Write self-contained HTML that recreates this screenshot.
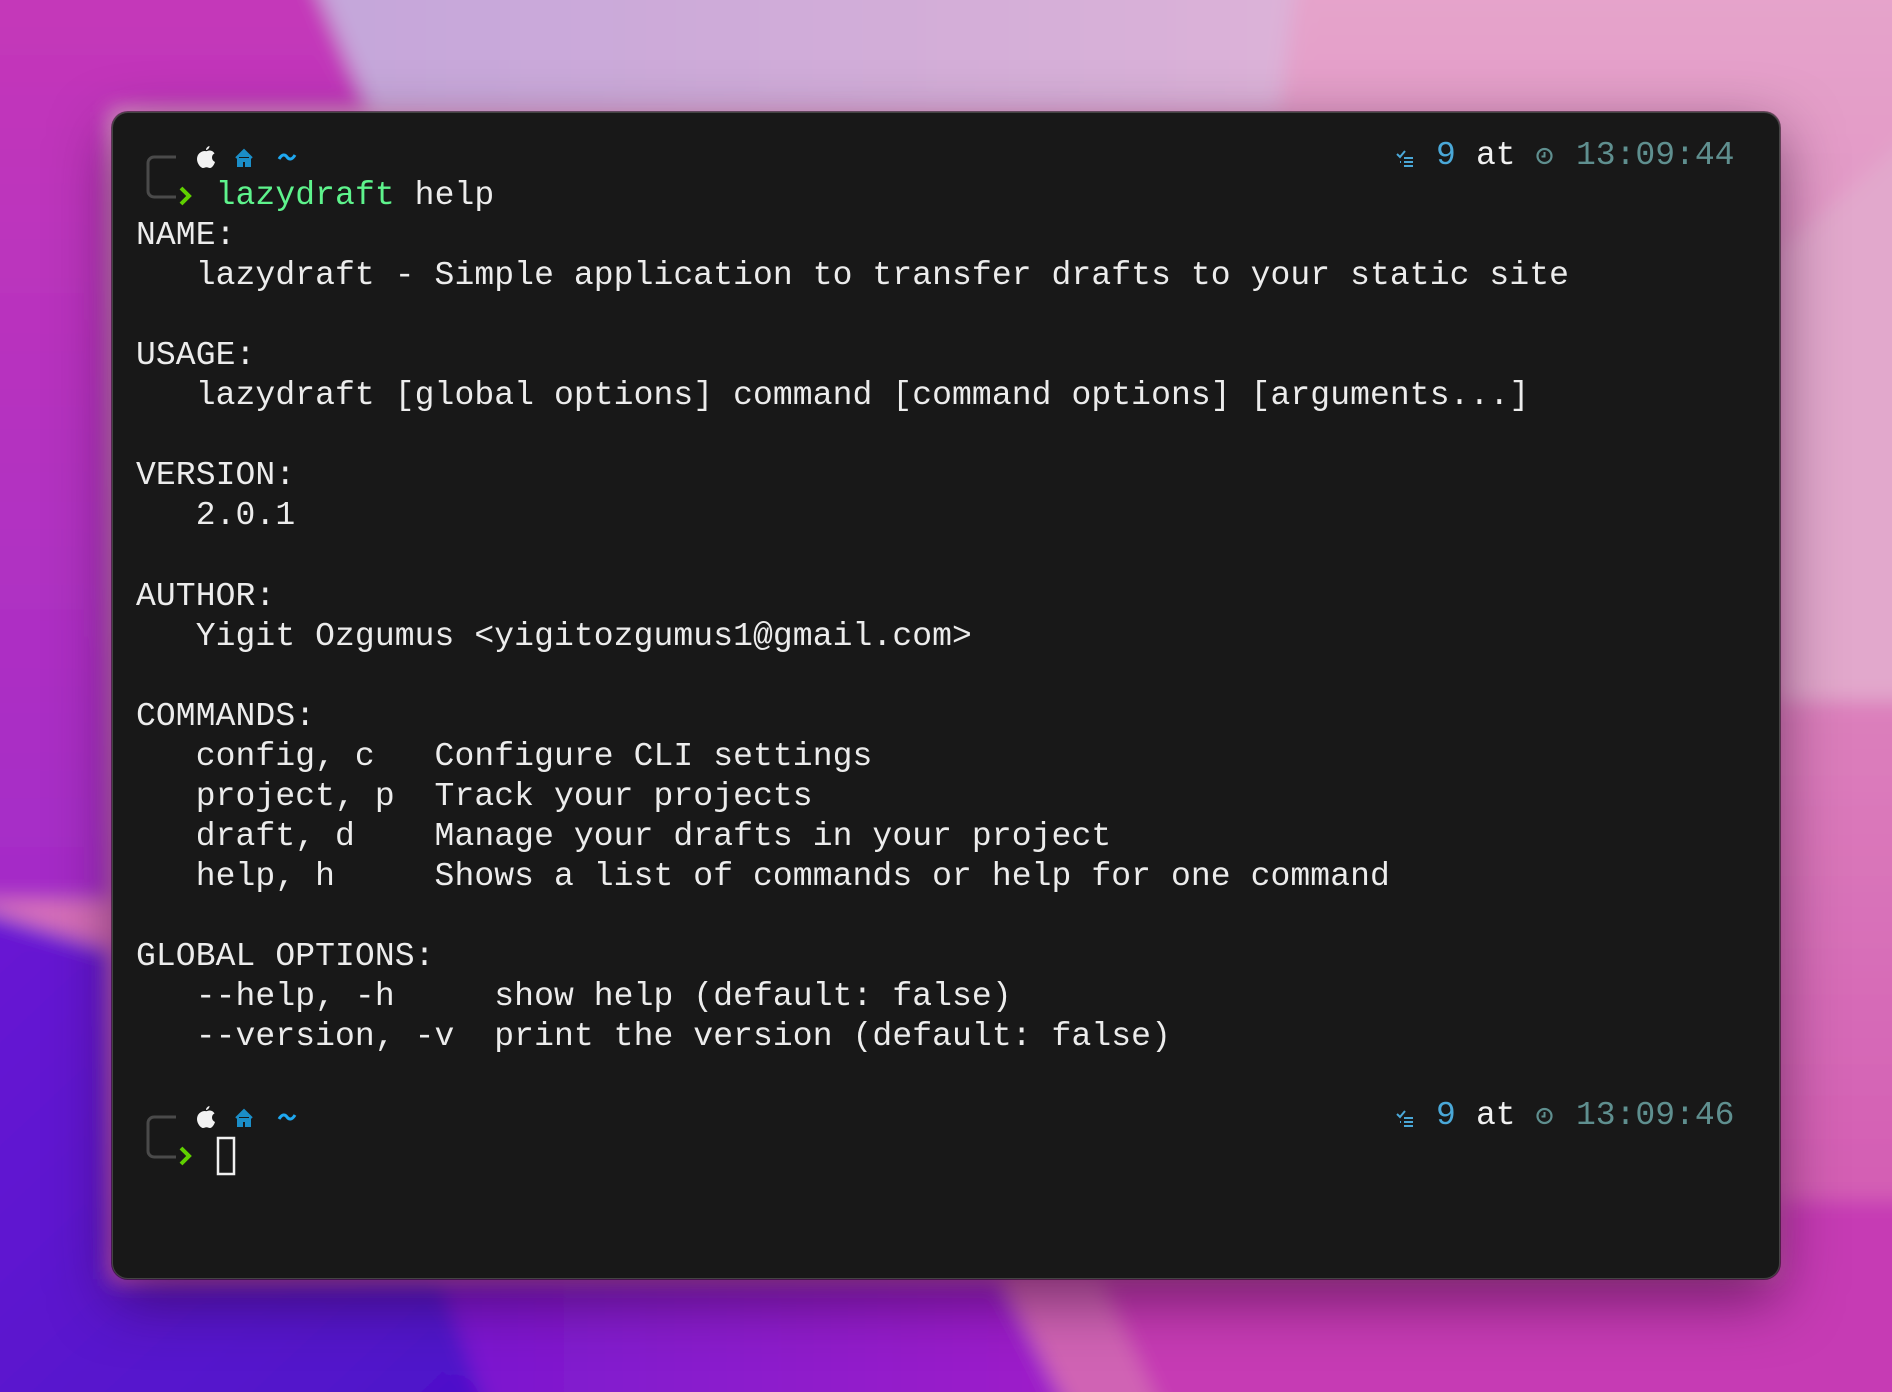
<!DOCTYPE html>
<html><head><meta charset="utf-8"><style>
html,body{margin:0;padding:0;width:1892px;height:1392px;overflow:hidden;}
body{position:relative;background:#b040c0;font-family:"Liberation Mono",monospace;}
#bg{position:absolute;left:0;top:0;}
.win{position:absolute;left:112px;top:112px;width:1668px;height:1167px;background:#181818;border-radius:16px;border:1px solid #444;box-sizing:border-box;box-shadow:0 20px 60px rgba(40,0,40,.55),0 0 0 1px rgba(0,0,0,.5);}
pre{position:absolute;left:136px;top:136px;margin:0;font-family:"Liberation Mono",monospace;font-size:33px;line-height:40.05px;color:#ececec;letter-spacing:0.1px;}
.g{color:#5ef38c}
.abs{position:absolute;font-size:33px;line-height:40px;font-family:"Liberation Mono",monospace;white-space:pre}
</style></head><body>
<svg id="bg" width="1892" height="1392" viewBox="0 0 1892 1392">
<defs>
<filter id="b"><feGaussianBlur stdDeviation="10"/></filter>
<linearGradient id="g1" x1="0" y1="0" x2="0" y2="1"><stop offset="0" stop-color="#c638b8"/><stop offset="1" stop-color="#a42cc8"/></linearGradient>
<linearGradient id="g2" x1="0" y1="0" x2="1" y2="0"><stop offset="0" stop-color="#c4a6da"/><stop offset="1" stop-color="#dcb2d8"/></linearGradient>
<linearGradient id="g3" x1="0" y1="0" x2="0" y2="1"><stop offset="0" stop-color="#e6a6cc"/><stop offset="0.5" stop-color="#dc80bc"/><stop offset="1" stop-color="#cf4cb0"/></linearGradient>
<linearGradient id="g4" x1="0" y1="0" x2="1" y2="1"><stop offset="0" stop-color="#6a1ad4"/><stop offset="1" stop-color="#4a10c8"/></linearGradient>
<linearGradient id="g5" x1="0" y1="0" x2="1" y2="0"><stop offset="0" stop-color="#7a18d0"/><stop offset="1" stop-color="#a020c8"/></linearGradient>
</defs>
<g filter="url(#b)">
<rect x="-50" y="-50" width="2000" height="1500" fill="url(#g3)"/>
<polygon points="-50,-50 300,-50 370,112 112,112 112,900 -50,900" fill="url(#g1)"/>
<polygon points="300,-50 1300,-50 1280,112 370,112" fill="url(#g2)"/>
<polygon points="-50,900 112,950 112,1279 480,1279 540,1450 -50,1450" fill="url(#g4)"/>
<polygon points="440,1279 1000,1279 1100,1450 500,1450" fill="url(#g5)"/>
<polygon points="1000,1279 1780,1279 1780,1200 1950,1200 1950,1450 1090,1450" fill="#c63ab4"/>
<polygon points="1000,1279 1100,1279 1180,1450 1090,1450" fill="#d064b4"/>
<polygon points="1780,250 1950,100 1950,700 1780,700" fill="#e2a8cc"/>
</g>
</svg>
<div class="win"></div>
<pre>

    <span class="g">lazydraft</span> help
NAME:
   lazydraft - Simple application to transfer drafts to your static site

USAGE:
   lazydraft [global options] command [command options] [arguments...]

VERSION:
   2.0.1

AUTHOR:
   Yigit Ozgumus &lt;yigitozgumus1@gmail.com&gt;

COMMANDS:
   config, c   Configure CLI settings
   project, p  Track your projects
   draft, d    Manage your drafts in your project
   help, h     Shows a list of commands or help for one command

GLOBAL OPTIONS:
   --help, -h     show help (default: false)
   --version, -v  print the version (default: false)
</pre>
<svg style="position:absolute;left:0;top:0" width="1892" height="1392">
<g id="p1">
<path d="M176 157 H154 a6 6 0 0 0 -6 6 V191 a6 6 0 0 0 6 6 H176" fill="none" stroke="#4a4a4a" stroke-width="3"/>
<path d="M181 188 L189 196 L181 204" fill="none" stroke="#5fd000" stroke-width="4"/>
<path d="M205 151 c-4 0 -8 3 -8 8 c0 5 4 9 6 9 c1.5 0 2 -0.8 3.5 -0.8 c1.5 0 2 0.8 3.5 0.8 c2 0 4 -3 5 -6 c-2 -1 -3 -2.5 -3 -4.5 c0 -2 1 -3.3 2.5 -4 c-1 -2 -3 -3 -5 -3 c-1.5 0 -2.5 0.7 -3.5 0.7 z M206 150 c0 -2 1.5 -3.5 3.5 -4 c0 2 -1.5 3.8 -3.5 4z" fill="#f2f2f2"/>
<path d="M236 158 L244 150 L252 158 M238 157 V166 H242 V161 H246 V166 H250 V157" fill="#1b8ec8" stroke="#1b8ec8" stroke-width="2"/>
<path d="M279 159 c3 -5 6 -5 8 -2 s5 3 8 -2" fill="none" stroke="#1fa8f0" stroke-width="3"/>
</g>
<use href="#p1" y="960"/>
<rect x="218" y="1138" width="16" height="36" fill="none" stroke="#f0f0f0" stroke-width="2.5"/>
<g id="r1">
<path d="M1397 154 l3 3 l5 -6 M1404 158 h9 M1404 162 h9 M1404 166 h9 M1400 162 h1" fill="none" stroke="#4aa8d8" stroke-width="2"/>
<circle cx="1544.5" cy="156" r="7" fill="none" stroke="#5f8f8f" stroke-width="2.2"/>
<path d="M1544.5 152 v4.5 h-3" fill="none" stroke="#5f8f8f" stroke-width="2"/>
</g>
<use href="#r1" y="960"/>
</svg>
<div class="abs" style="left:1436px;top:136px;color:#4aa8d8">9</div>
<div class="abs" style="left:1476px;top:136px;color:#f0f0f0">at</div>
<div class="abs" style="left:1576px;top:136px;color:#5f8f8f">13:09:44</div>
<div class="abs" style="left:1436px;top:1096px;color:#4aa8d8">9</div>
<div class="abs" style="left:1476px;top:1096px;color:#f0f0f0">at</div>
<div class="abs" style="left:1576px;top:1096px;color:#5f8f8f">13:09:46</div>
</body></html>
